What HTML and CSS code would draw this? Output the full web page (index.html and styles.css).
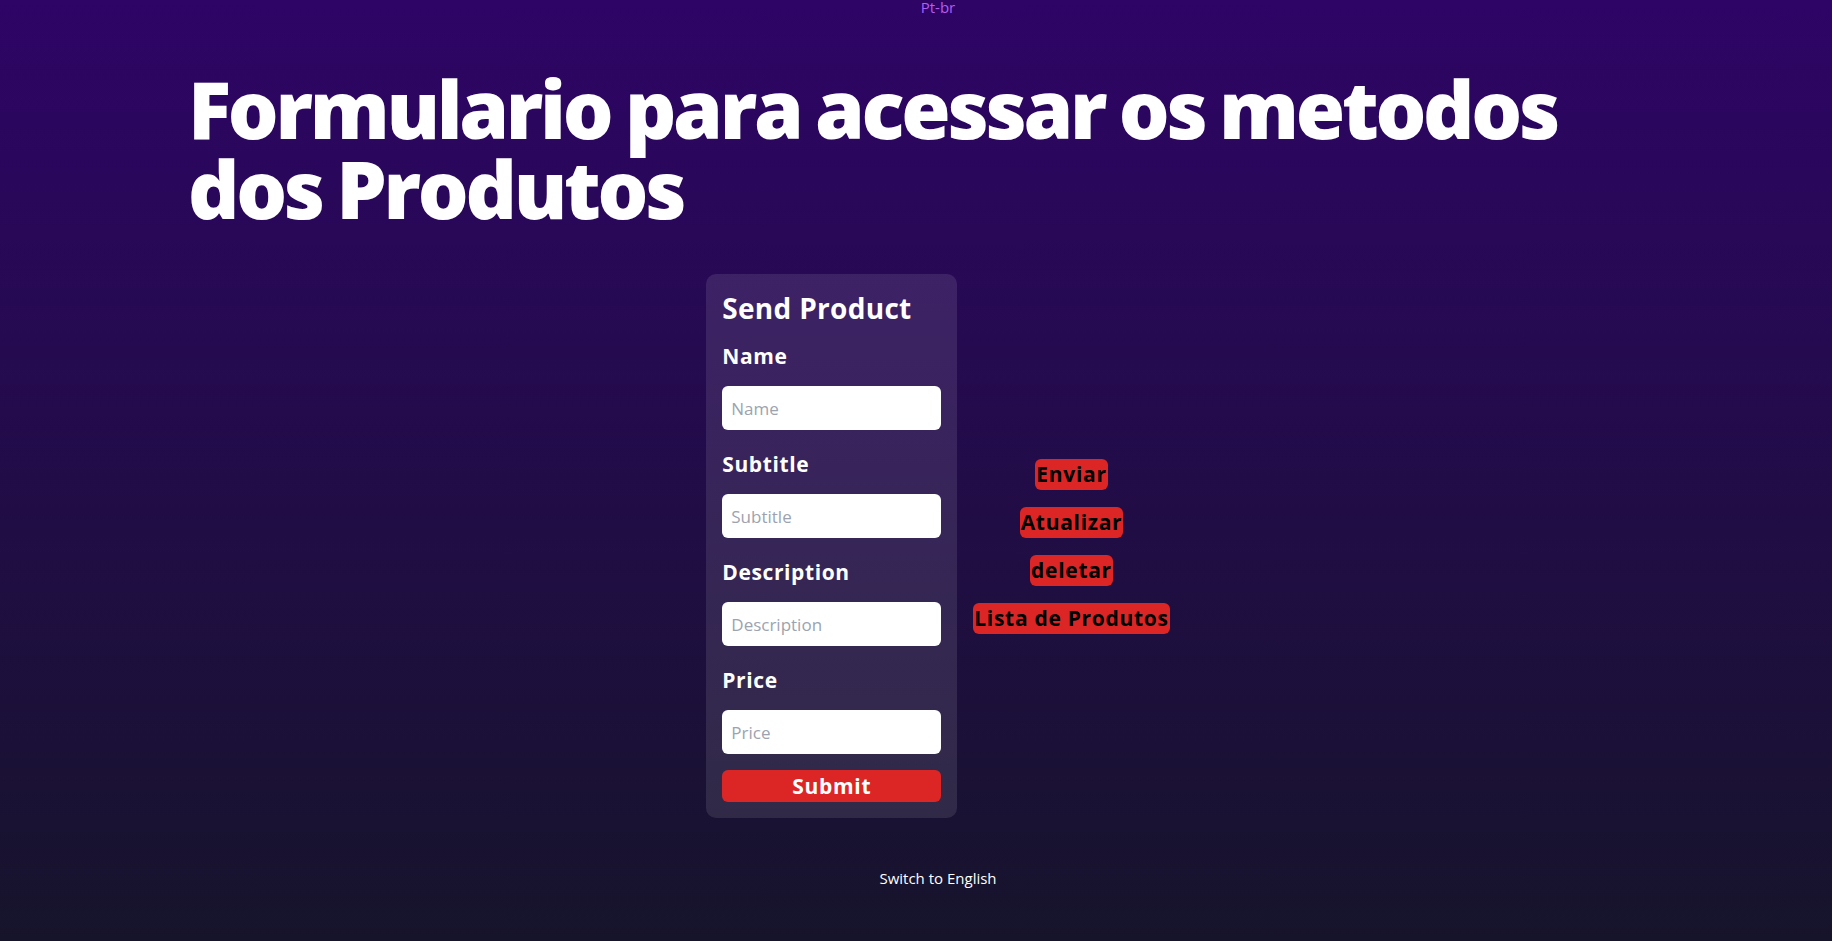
FILE: index.html
```html
<!DOCTYPE html>
<html lang="pt-br">
<head>
<meta charset="utf-8">
<title>Produtos</title>
<link rel="stylesheet" href="styles.css">
</head>
<body>
<div class="page">
  <div class="lang-top">Pt-br</div>
  <div class="container">
    <h1 class="hero-title">Formulario para acessar os metodos dos Produtos</h1>
    <div class="content-row">
      <form class="card">
        <h2 class="card-title">Send Product</h2>
        <label class="field-label" for="name">Name</label>
        <input class="field-input" id="name" type="text" placeholder="Name">
        <label class="field-label" for="subtitle">Subtitle</label>
        <input class="field-input" id="subtitle" type="text" placeholder="Subtitle">
        <label class="field-label" for="description">Description</label>
        <input class="field-input" id="description" type="text" placeholder="Description">
        <label class="field-label" for="price">Price</label>
        <input class="field-input field-input-last" id="price" type="text" placeholder="Price">
        <button class="submit-btn" type="button">Submit</button>
      </form>
      <div class="actions">
        <button class="action-btn" type="button">Enviar</button>
        <button class="action-btn" type="button">Atualizar</button>
        <button class="action-btn" type="button">deletar</button>
        <button class="action-btn" type="button">Lista de Produtos</button>
      </div>
    </div>
    <div class="lang-bottom">Switch to English</div>
  </div>
</div>
</body>
</html>
```
FILE: styles.css
```css
html, body {
  margin: 0;
  padding: 0;
}
body {
  min-height: 100vh;
  background: linear-gradient(to bottom, #2e0466 0%, #16142b 100%);
  font-family: "Open Sans", "Noto Sans", sans-serif;
  color: #ffffff;
}
.page {
  box-sizing: border-box;
  width: 100%;
  padding-left: 44px;
}
.lang-top {
  text-align: center;
  font-size: 15px;
  line-height: 14px;
  color: #b35cf6;
}
.container {
  max-width: 1500px;
  margin: 0 auto;
}
.hero-title {
  margin: 54px 0 0 0;
  font-size: 80px;
  line-height: 80px;
  font-weight: 800;
  letter-spacing: -3.3px;
  word-spacing: -3px;
  color: #ffffff;
}
.content-row {
  display: flex;
  justify-content: center;
  align-items: center;
  gap: 16px;
  margin-top: 46px;
}
.card {
  box-sizing: border-box;
  width: 251px;
  padding: 16px;
  background: rgba(255, 255, 255, 0.1);
  border-radius: 10px;
  display: flex;
  flex-direction: column;
}
.card-title {
  margin: 0 0 16px 0;
  font-size: 28px;
  line-height: 36px;
  font-weight: 700;
  letter-spacing: 0.3px;
}
.field-label {
  display: block;
  font-size: 21px;
  line-height: 28px;
  font-weight: 700;
  letter-spacing: 0.6px;
  margin-bottom: 16px;
}
.field-input {
  box-sizing: border-box;
  height: 44px;
  width: 100%;
  border: none;
  border-radius: 6px;
  padding: 0 9px;
  font-family: inherit;
  font-size: 17px;
  color: #111;
  background: #ffffff;
  margin: 0 0 20px 0;
  outline: none;
}
.field-input::placeholder {
  color: #9ca3af;
}
.field-input-last {
  margin-bottom: 16px;
}
.submit-btn {
  height: 32px;
  border: none;
  border-radius: 6px;
  background: #dc2626;
  color: #ffffff;
  font-family: inherit;
  font-size: 21px;
  line-height: 32px;
  font-weight: 700;
  letter-spacing: 0.7px;
  padding: 0;
}
.actions {
  display: flex;
  flex-direction: column;
  align-items: center;
  gap: 17px;
}
.action-btn {
  border: none;
  border-radius: 6px;
  background: #dc2626;
  color: #000000;
  font-family: inherit;
  font-size: 21px;
  line-height: 31px;
  height: 31px;
  font-weight: 700;
  letter-spacing: 0.7px;
  padding: 0 1px;
}
.lang-bottom {
  text-align: center;
  margin-top: 48px;
  font-size: 15px;
  line-height: 24px;
  color: #ffffff;
}
```
